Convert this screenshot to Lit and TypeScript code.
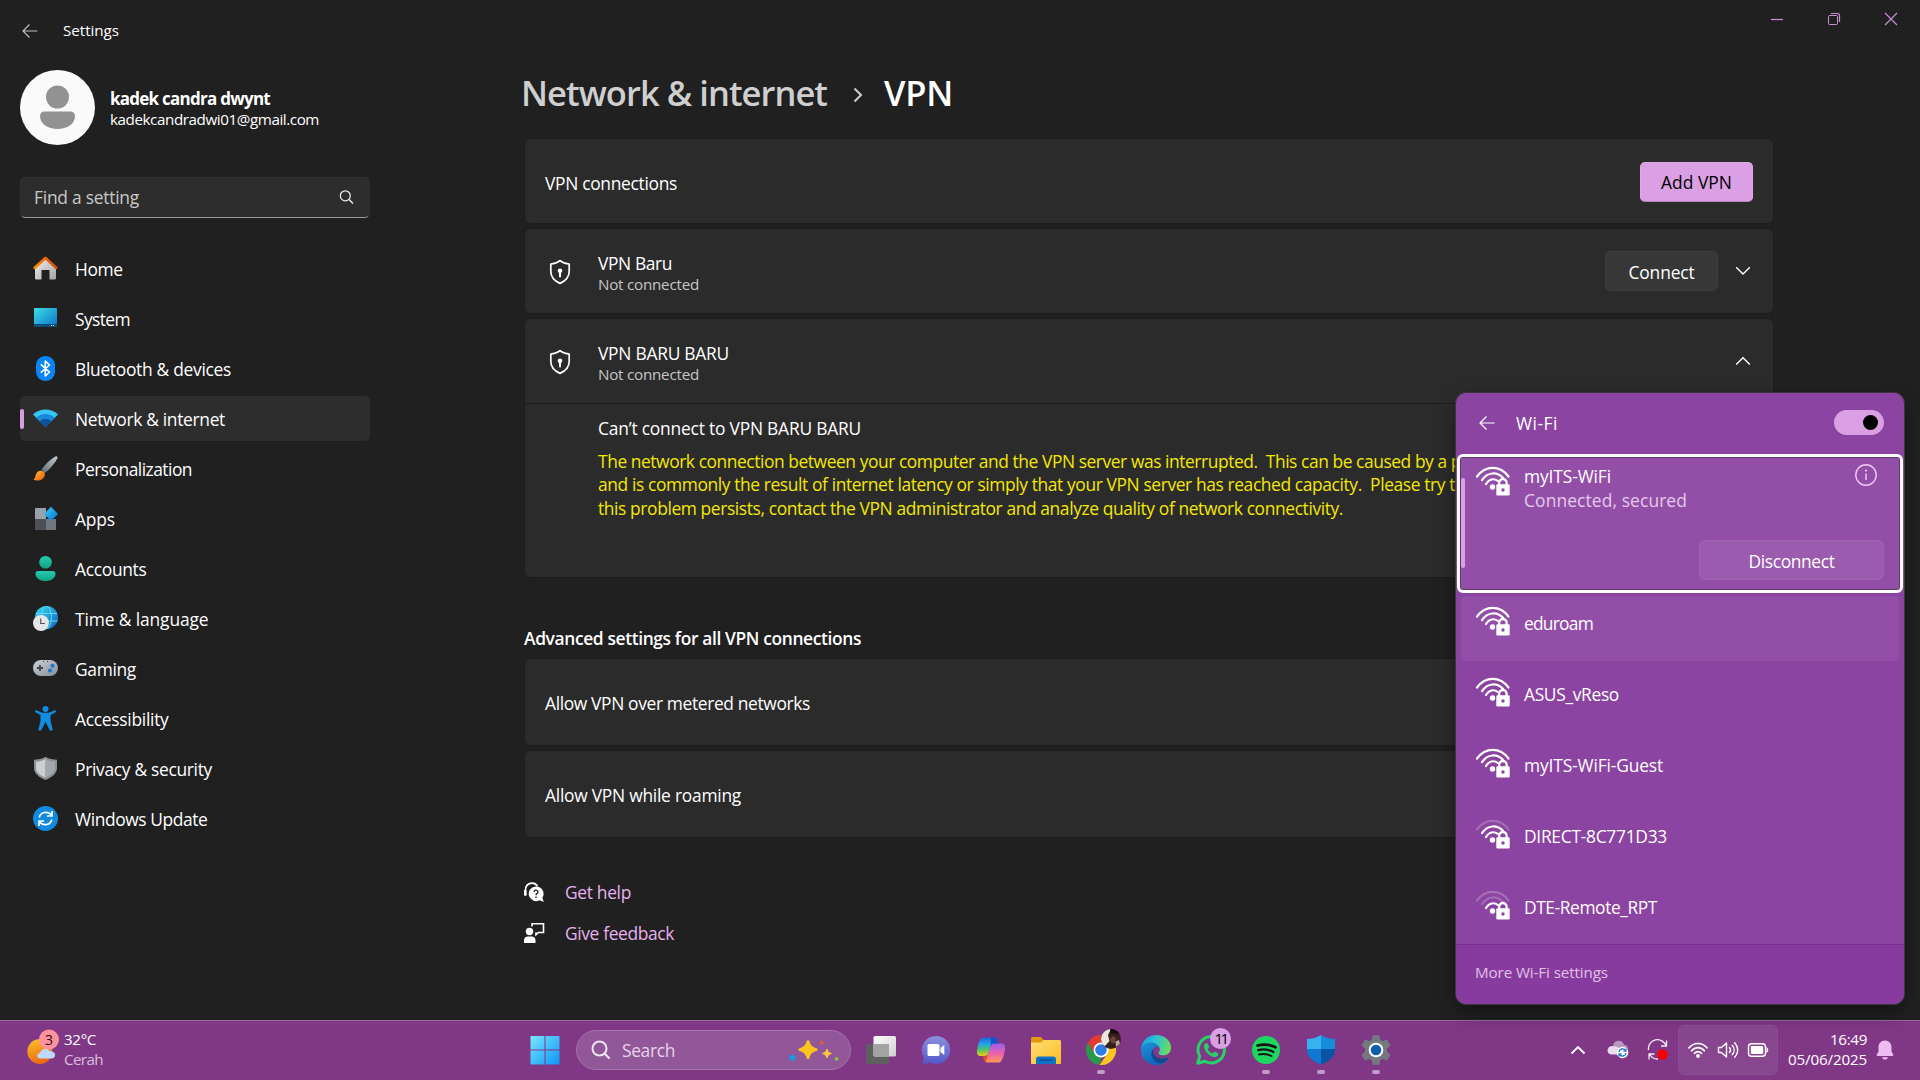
import { LitElement, html, svg, css, TemplateResult } from "lit";
import { customElement, property } from "lit/decorators.js";
import { classMap } from "lit/directives/class-map.js";

/** A single line of text, tracked so that it fills a given width. */
@customElement("fit-text")
class FitText extends LitElement {
  static styles = css`
    :host { display: inline-block; white-space: pre; }
    .line { display: inline-block; }
  `;
  @property() text = "";
  @property({ type: Number }) width = 0;

  render() {
    return html`<span class="line">${this.text}</span>`;
  }

  updated() {
    const line = this.renderRoot.querySelector(".line") as HTMLElement;
    line.style.letterSpacing = "0px";
    const natural = line.getBoundingClientRect().width;
    line.style.letterSpacing = `${(this.width - natural) / this.text.length}px`;
  }
}

const fit = (text: string, width: number) => html`<fit-text .text=${text} .width=${width}></fit-text>`;

const icon = (w: number, h: number, body: unknown, cls = "ico") =>
  html`<svg class=${cls} width=${w} height=${h} viewBox="0 0 ${w} ${h}" fill="none">${body}</svg>`;

const backArrow = icon(16, 16, svg`<path d="M7.5 1.5 1 8l6.5 6.5M1 8h14.5" stroke="currentColor" stroke-width="1.2"/>`);

const lens = icon(16, 16, svg`<circle cx="7.3" cy="6.8" r="5" stroke="#eee" stroke-width="1.2"/><path d="M11 10.5 15 14.6" stroke="#eee" stroke-width="1.4"/>`);

const chevDown = icon(16, 10, svg`<path d="M1.2 1.3 8 8l6.8-6.7" stroke="#fff" stroke-width="1.4"/>`);
const chevUp = icon(16, 10, svg`<path d="M1.2 8.5 8 1.8l6.8 6.7" stroke="#fff" stroke-width="1.4"/>`);

const shieldKey = icon(22, 26, svg`
  <path d="M11 1.6C8.2 3.9 5 4.8 1.8 5v7.2c0 5.6 3.4 9.6 9.2 12.2 5.8-2.6 9.2-6.600 9.2-12.200V5C17 4.800 13.800 3.900 11 1.600Z" stroke="#fff" stroke-width="1.7" stroke-linejoin="round"/>
  <circle cx="11" cy="11.800" r="2.300" fill="#fff"/><path d="M11 12v6.200" stroke="#fff" stroke-width="2"/>`);

interface NavItem { label: string; width: number; art: TemplateResult; selected?: boolean }

const navItems: NavItem[] = [
  { label: "Home", width: 47.5, art: icon(25, 25, svg`
    <defs><linearGradient id="hm" x1="0" y1="0" x2="1" y2="1"><stop stop-color="#efefef"/><stop offset="1" stop-color="#a5a5a5"/></linearGradient>
    <linearGradient id="hr"><stop stop-color="#fb8c00"/><stop offset="1" stop-color="#d9480f"/></linearGradient></defs>
    <path d="M2 11 12.500 2.500 23 11v11.300c0 .700-.500 1.200-1.200 1.200H16.500V14h-8v9.500H3.200C2.500 23.500 2 23 2 22.300Z" fill="url(#hm)"/>
    <path d="M1.800 11.800 12.500 2l10.700 9.800" stroke="url(#hr)" stroke-width="2.800" stroke-linecap="round" stroke-linejoin="round"/>`) },
  { label: "System", width: 55, art: icon(25, 25, svg`
    <defs><linearGradient id="sy" x1="0" y1="0" x2="1" y2="1"><stop stop-color="#3adfe6"/><stop offset="1" stop-color="#0d6fc7"/></linearGradient></defs>
    <rect x="1" y="2" width="23" height="19" rx="1" fill="url(#sy)"/><path d="M1 18h23v2c0 .600-.400 1-1 1H2c-.600 0-1-.400-1-1Z" fill="#0b4f78"/>
    <path d="M18 19.500h1M20 19.500h1" stroke="#cfe8f5"/>`) },
  { label: "Bluetooth & devices", width: 156, art: icon(25, 25, svg`
    <rect x="3" width="19" height="25" rx="9" fill="#0a84f5"/>
    <path d="M7.800 8.300 16.500 16 12.300 20V5l4.200 4L7.800 16.700" stroke="#fff" stroke-width="1.600" stroke-linejoin="round"/>`) },
  { label: "Network & internet", width: 150, selected: true, art: icon(25, 25, svg`
    <path d="M0 8.400C7 1.700 18 1.700 25 8.400L12.500 21Z" fill="#37c6f4"/><path d="M3.300 11.700c5.300-4.900 13.100-4.900 18.400 0L12.500 21Z" fill="#1788db"/><path d="M6.800 15.300c3.400-3 8-3 11.400 0L12.500 21Z" fill="#0d4f9c"/>`) },
  { label: "Personalization", width: 117, art: icon(25, 25, svg`
    <defs><linearGradient id="br" x1="1" y1="0" x2="0" y2="1"><stop stop-color="#c5cbd0"/><stop offset="1" stop-color="#5f6b74"/></linearGradient>
    <linearGradient id="bt" x1="0" y1="0" x2="1" y2="1"><stop stop-color="#ffc23d"/><stop offset="1" stop-color="#e8560c"/></linearGradient></defs>
    <path d="M8.500 13.500C13 7.500 18 2.800 22.300.500c1.500-.700 2.700.500 2 2C22 7 17.500 12.300 11.800 17Z" fill="url(#br)"/>
    <path d="M4.200 16.300c2.300-2.600 7.200-1.800 7.600 1.700.500 5.500-6.500 8-11.600 5.800 2.500-1 2-5.200 4-7.500Z" fill="url(#bt)"/>`) },
  { label: "Apps", width: 40, art: icon(25, 25, svg`
    <defs><linearGradient id="ap" x1="0" y1="0" x2="1" y2="1"><stop stop-color="#35d0f7"/><stop offset="1" stop-color="#0a6fd0"/></linearGradient></defs>
    <path d="M2 3c0-.600.400-1 1-1h10v11H2Z" fill="#98a1ac"/><path d="M2 13h11v11H3c-.600 0-1-.400-1-1Z" fill="#4c5157"/><path d="M13 13h10v10c0 .600-.400 1-1 1H13Z" fill="#717880"/>
    <path d="M18 .800 25 8l-7 7-7-7Z" fill="url(#ap)"/>`) },
  { label: "Accounts", width: 71.5, art: icon(25, 25, svg`
    <defs><linearGradient id="ac" x1="0" y1="0" x2="0" y2="1"><stop stop-color="#26cbb0"/><stop offset="1" stop-color="#12a182"/></linearGradient></defs>
    <circle cx="12.500" cy="6.300" r="6.300" fill="url(#ac)"/><path d="M5 15h15c1.500 0 2.500 1 2.500 2.400C22.500 22 18 25 12.500 25S2.500 22 2.500 17.400C2.500 16 3.500 15 5 15Z" fill="url(#ac)"/>`) },
  { label: "Time & language", width: 133.5, art: icon(25, 25, svg`
    <defs><linearGradient id="tm" x1="0" y1="0" x2="1" y2="1"><stop stop-color="#3bdcf0"/><stop offset="1" stop-color="#0b62c4"/></linearGradient></defs>
    <circle cx="13.500" cy="11.500" r="11.500" fill="url(#tm)"/><ellipse cx="13.500" cy="11.500" rx="5" ry="11.300" stroke="#62dcf4"/><path d="M3 7.500h21M3 15h21.500" stroke="#62dcf4"/>
    <circle cx="8" cy="17" r="8" fill="#e6e6e8"/><path d="M7.700 12.500v5h4.300" stroke="#555" stroke-width="1.200"/>`) },
  { label: "Gaming", width: 61, art: icon(25, 25, svg`
    <defs><linearGradient id="gm" x1="0" y1="0" x2="1" y2="1"><stop stop-color="#cdd2d7"/><stop offset="1" stop-color="#858d95"/></linearGradient></defs>
    <rect y="4" width="25" height="16" rx="8" fill="url(#gm)"/><path d="M7 9v6M4 12h6" stroke="#41464b" stroke-width="1.800"/>
    <circle cx="19.500" cy="9.700" r="2" fill="#1377d1"/><circle cx="17" cy="14.500" r="2" fill="#1377d1"/><path d="M10 5.500h1M14 5.500h1" stroke="#444"/>`) },
  { label: "Accessibility", width: 93.5, art: icon(25, 25, svg`
    <g fill="#0f8de3"><circle cx="12.500" cy="3" r="3"/><path d="M3.500 4.300 9 6.800h7l5.500-2.500c1.500-.500 2 1.400.800 2.100L17.500 9v6l2 8c.300 1.900-2.300 2.500-3 .800l-4-8-4 8c-.700 1.700-3.300 1.100-3-.800l2-8V9L2.700 6.400c-1.200-.700-.700-2.600.800-2.100Z"/></g>`) },
  { label: "Privacy & security", width: 137, art: icon(25, 25, svg`
    <path d="M12.500.800C16 3 20 3.800 24 3.800V12c0 5.500-5 9.300-11.500 12C6 21.300 1 17.500 1 12V3.800C5 3.800 9 3 12.500.800Z" fill="#8b9097"/>
    <path d="M12.500 3C9.500 4.700 6.500 5.500 3 5.800V12c0 4.200 3.800 7.300 9.500 9.800Z" fill="#cdd0d3"/><path d="M12.500 3c3 1.700 6 2.500 9.500 2.800V12c0 4.200-3.800 7.300-9.500 9.800Z" fill="#a4a8ad"/>`) },
  { label: "Windows Update", width: 132.5, art: icon(25, 25, svg`
    <circle cx="12.500" cy="12.500" r="12.500" fill="#118be0"/>
    <path d="M6.200 11.500c1.300-5.500 8-7 12.300-2.700M18.800 13.500c-1.300 5.500-8 7-12.300 2.700" stroke="#fff" stroke-width="1.700"/>
    <path d="M19 5v5h-5M6 20v-5h5" stroke="#fff" stroke-width="1.700"/>`) },
];

interface Network { name: string; width: number; level: number; hover?: boolean }

const networks: Network[] = [
  { name: "eduroam", width: 69, level: 3, hover: true },
  { name: "ASUS_vReso", width: 95, level: 3 },
  { name: "myITS-WiFi-Guest", width: 139, level: 3 },
  { name: "DIRECT-8C771D33", width: 143, level: 2 },
  { name: "DTE-Remote_RPT", width: 133, level: 1 },
];

const wifiLock = (level: number) => {
  const dim = (n: number) => (level >= n ? "1" : "0.22");
  return icon(36, 30, svg`
    <g stroke="#fff" stroke-width="2.200" stroke-linecap="round">
      <path d="M2 10.500C10.500-1 25-1 33.500 10.500" opacity=${dim(3)}/>
      <path d="M7 14.200C12.500 5.800 22 5.500 28 11.800" opacity=${dim(2)}/>
      <path d="M11 18c3-5 7.500-6 11.800-3.200" opacity=${dim(1)}/>
    </g>
    <circle cx="17.500" cy="21" r="2.700" fill="#fff"/>
    <rect x="21.300" y="18.300" width="13.400" height="11.200" rx="1.200" fill="#fff"/>
    <path d="M24.200 19v-2.300a3.700 3.700 0 0 1 7.400 0V19" stroke="#fff" stroke-width="2.300"/>
    <circle cx="28" cy="24" r="1.700" fill="#8b45a2"/>`);
};

interface Task { name: string; art: TemplateResult; running?: boolean; badge?: TemplateResult }

const tasks: Task[] = [
  { name: "Task view", art: icon(30, 30, svg`
    <defs><linearGradient id="tv" x1="0" y1="0" x2="1" y2="1"><stop stop-color="#fff"/><stop offset="1" stop-color="#cfcfcf"/></linearGradient></defs>
    <rect y="9" width="23" height="20" rx="1.500" fill="#5f5f5f"/><rect x="7.500" y="1" width="22.500" height="20.500" rx="1.500" fill="url(#tv)"/>
    <path d="M7.500 9H23v12.500H9c-.800 0-1.500-.700-1.500-1.500Z" fill="#a3a3a3"/>`) },
  { name: "Chat", art: icon(30, 30, svg`
    <defs><linearGradient id="ch" x1="0" y1="0" x2="0" y2="1"><stop stop-color="#8a90dc"/><stop offset="1" stop-color="#5457c8"/></linearGradient></defs>
    <path d="M15 1a14 14 0 1 1-5.500 26.800L1.500 29l1.300-7A14 14 0 0 1 15 1Z" fill="url(#ch)"/>
    <rect x="6.500" y="9" width="12" height="12" rx="1.500" fill="#fff"/><path d="m19.500 13 3.800-3v10l-3.800-3Z" fill="#fff"/>`) },
  { name: "Copilot", art: icon(30, 30, svg`
    <defs><linearGradient id="c1" x1="0" y1="0" x2="0" y2="1"><stop stop-color="#1f63d6"/><stop offset=".35" stop-color="#21a5ea"/><stop offset=".65" stop-color="#4cc36b"/><stop offset="1" stop-color="#f5c518"/></linearGradient>
    <linearGradient id="c2" x1="0" y1="0" x2="0" y2="1"><stop stop-color="#9a5ff0"/><stop offset=".5" stop-color="#e95fb2"/><stop offset="1" stop-color="#ff9a52"/></linearGradient></defs>
    <path d="M8 2.500h10.500c2.300 0 2.900 1.400 3.500 4l.600 2H18c-2 0-2.800 1.200-3.400 3.200l-2 6.300c-.700 2.200-1.800 3-4 3H4.500C1.500 21 .500 18.500 1 15.500 1.700 10.500 3 6 4.500 4 5.300 3 6.500 2.500 8 2.500Z" fill="url(#c1)"/>
    <path d="M22 27.500H11.500c-2.300 0-3-1.400-3.500-4L7.500 21H9c2 0 3-.800 3.600-3l2.400-7.500c.600-1.500 1.500-2 3-2h7.500c3 0 4 2.500 3.500 5.500-.700 5-2 9.500-3.500 11.500-.800 1.500-2 2-3.500 2Z" fill="url(#c2)"/>
    <path d="M15 2.500h3.500c2.300 0 2.900 1.400 3.500 4l.600 2H18c-2 0-2.800 1.200-3.400 3.200Z" fill="#1b51c4"/><path d="M7 21h2c2 0 3-.800 3.600-3l-2.400 7.500c-.500 1.300-.200 1.700.8 2-2 0-3-2-3.500-4Z" fill="#e5482d"/>`) },
  { name: "File Explorer", art: icon(30, 30, svg`
    <defs><linearGradient id="fe" x1="0" y1="0" x2="1" y2="1"><stop stop-color="#ffdf73"/><stop offset="1" stop-color="#fdbc24"/></linearGradient></defs>
    <path d="M0 3.500C0 2.600.700 2 1.500 2H9c.700 0 1.200.200 1.700.700L13 5.500V12H0Z" fill="#e0980a"/>
    <path d="M0 7.500h10l2.500-2.500H28.500c.900 0 1.500.700 1.500 1.500V28c0 .600-.400 1-1 1H1c-.600 0-1-.400-1-1Z" fill="url(#fe)"/>
    <path d="M5 29v-5c0-1.500 1-2.500 2.500-2.500h15c1.500 0 2.500 1 2.500 2.500v5Z" fill="#0f74c9"/><path d="M8.500 25h13" stroke="#0a4d8e" stroke-width="1.400"/>`) },
  { name: "Chrome", running: true, badge: icon(20, 20, svg`
    <defs><clipPath id="av"><circle cx="10" cy="10" r="10"/></clipPath></defs>
    <g clip-path="url(#av)"><rect width="20" height="20" fill="#37201c"/><path d="M0 0h10L7 6 8.500 12 4 17l-4-2Z" fill="#e9e7df"/><path d="M9 9.500 12 7l3 2-1 5-3.500.500Z" fill="#6b4339"/><path d="M14.500 12.500 18 11l1 4-4 3Z" fill="#b9a9a3"/><path d="M9 0h8l2 5-9-1Z" fill="#100b0b"/></g>`, "badge avatar"), art: icon(30, 30, svg`
    <path d="M2 7.500A15 15 0 0 1 28 7.500H15L8.500 18.700Z" fill="#e33b2e"/><path d="M2 7.500 8.500 18.700 15 22.500h1L13 29.900A15 15 0 0 1 2 7.500Z" fill="#269a48"/><path d="M28 7.500A15 15 0 0 1 13.500 29.900L21.500 18.500 20 7.500Z" fill="#fcc521"/>
    <circle cx="15" cy="15" r="7.500" fill="#fff"/><circle cx="15" cy="15" r="5.800" fill="#2f7de9"/>`) },
  { name: "Edge", art: icon(30, 30, svg`
    <defs><linearGradient id="e1" x1="0" y1=".3" x2="1" y2=".5"><stop stop-color="#1b9de2"/><stop offset=".5" stop-color="#2fc3d4"/><stop offset="1" stop-color="#6ade53"/></linearGradient>
    <linearGradient id="e2" x1="0" y1="0" x2=".6" y2="1"><stop stop-color="#1c93d8"/><stop offset="1" stop-color="#0f62b8"/></linearGradient></defs>
    <path d="M0 14C.500 6 7 0 15 0c9 0 15 6 15 12.500 0 5-3.500 7.800-8 7.800-3.500 0-5.300-1.200-4-3 2.500-4-.500-8.300-6-8.300C6 9 1.500 11 0 14Z" fill="url(#e1)"/>
    <path d="M0 14c1-4 5-6.500 10-6.500 4.500 0 8 2.500 8.500 6-2-3-6.500-2-6.500 3 0 5.500 5 9.500 10.500 9 2-.200 3.500-.800 4.800-1.500C25 28 20.500 30 15.500 30 7 30-.500 23.500 0 14Z" fill="url(#e2)"/>
    <path d="M12 13.800c-1.700 2.500-2.500 6.500 0 10.200 2 3 5.500 4.500 9 4.300 2.500-1 4.800-2.800 6.400-5.300.4-.700-.200-1-.800-.700C20 26 12 22 12 15.500Z" fill="#114a8b"/>`) },
  { name: "WhatsApp", badge: html`<span class="badge count">${fit("11", 12)}</span>`, art: icon(30, 30, svg`
    <path d="m1.800 28.200 1.900-7A13.200 13.200 0 1 1 8.800 26.300Z" stroke="#25d366" stroke-width="3" stroke-linejoin="round"/>
    <path d="M10.500 8c-1 0-2.500 1.200-2.500 3.500 0 4.500 6 10.500 10.500 10.500 2.300 0 4-1.500 4-3 0-.700-3.300-2.300-4-2.300s-1.500 2-2.200 1.800c-2-.700-4-2.700-4.600-4.300-.200-.700 1.300-1.400 1.300-2.200C13 11.500 11.800 8 10.500 8Z" fill="#25d366"/>`) },
  { name: "Spotify", running: true, art: icon(30, 30, svg`
    <circle cx="15" cy="15" r="14" fill="#1ed760"/><g stroke="#191414" stroke-linecap="round"><path d="M6.500 10.500c6-1.600 12.500-1 18 1.800" stroke-width="2.700"/><path d="M7.300 15.200c5-1.300 10.500-.800 15.200 1.800" stroke-width="2.300"/><path d="M8 19.500c4.300-1 8.700-.500 12.500 1.500" stroke-width="1.900"/></g>`) },
  { name: "Windows Security", running: true, art: icon(30, 30, svg`
    <defs><clipPath id="df"><path d="M15 0c4 2.800 8.500 4 14 4v11c0 7-6 11.500-14 14.500C7 26.500 1 22 1 15V4c5.500 0 10-1.200 14-4Z"/></clipPath></defs>
    <g clip-path="url(#df)"><path d="M0 0h15v14H0Z" fill="#36b3f0"/><path d="M15 0h15v14H15Z" fill="#168ddb"/><path d="M0 14h15v16H0Z" fill="#0e78d2"/><path d="M15 14h15v16H15Z" fill="#0a54a5"/></g>`) },
  { name: "Settings", running: true, art: icon(30, 30, svg`
    <path d="M12.300 1h5.400l1 4.300 2.800 1.600 4.200-1.400 2.900 4.700-3.300 3v3.600l3.300 3-2.900 4.700-4.200-1.400-2.800 1.600-1 4.300h-5.400l-1-4.300-2.800-1.600-4.200 1.400-2.900-4.700 3.300-3v-3.600l-3.300-3 2.900-4.700 4.200 1.400 2.800-1.600Z" fill="#747a80" stroke="#747a80" stroke-width="1.500" stroke-linejoin="round"/>
    <circle cx="15" cy="15" r="7.300" fill="#fff"/><circle cx="15" cy="15" r="5.300" fill="#0f5fae"/>`) },
];

@customElement("app-root")
class AppRoot extends LitElement {
  static styles = css`
    :host { display: block; width: 1920px; height: 1080px; overflow: hidden; position: relative; background: #202020; color: #fff;
      font: 17.4px/24px "Open Sans", "Noto Sans", sans-serif; font-stretch: 93%; }
    * { box-sizing: border-box; }
    .ico { display: block; flex: none; }
    .small { font-size: 15.2px; line-height: 20px; }
    .screen { display: flex; flex-direction: column; height: 1080px; }
    .window { height: 1020px; display: flex; flex-direction: column; }
    .titlebar { height: 60px; display: flex; justify-content: space-between; }
    .heading { display: flex; align-items: center; gap: 25px; padding: 0 0 0 22px; color: #fff; }
    .heading .label { margin-bottom: 1px; }
    .heading svg { color: #bdbdbd; margin-top: 1px; }
    .caption { display: flex; padding-top: 12px; gap: 43px; margin-right: 22px; color: #c98fd4; }

    .body { flex: 1; display: flex; }
    .sidebar { width: 370px; padding: 10px 0 0 20px; }
    .profile { display: flex; gap: 15px; align-items: center; height: 75px; }
    .who { display: flex; flex-direction: column; padding-top: 2px; }
    .name { font-weight: 700; line-height: 22px; font-size: 17px; }
    .who .small { margin-top: -1px; }
    .search { margin-top: 32px; height: 41px; width: 350px; border-radius: 5px; background: #2d2d2d; border: 1px solid #303030; border-bottom: 1px solid #9a9a9a;
      display: flex; justify-content: space-between; align-items: center; padding: 0 15px 1px 13px; color: #c8c8c8; }
    .nav { margin-top: 28px; display: flex; flex-direction: column; gap: 5px; }
    .item { height: 45px; width: 350px; display: flex; align-items: center; border-radius: 5px; padding-left: 13px; gap: 17px; }
    .item.selected { background: #2d2d2d; padding-left: 0; gap: 17px; }
    .item.selected::before { content: ""; width: 4px; height: 20px; border-radius: 2px; background: #d99ee2; margin-right: -8px; }
    .item .label { padding-top: 0; }

    .main { margin-left: 155px; width: 1248px; padding-top: 9px; }
    .crumbs { height: 48px; line-height: 48px; display: flex; align-items: center; font-size: 34.5px; font-weight: 600; margin-left: -4px; color: #cfcfcf; }
    .crumbs .sep { margin: 3px 20px 0 25px; }
    .crumbs .here { color: #fff; }
    .cards { display: flex; flex-direction: column; gap: 6px; margin-top: 22px; }
    .card { background: #2b2b2b; border-radius: 5px; box-shadow: 0 0 0 1px #1d1d1d; }
    .row { height: 84px; display: flex; align-items: center; justify-content: space-between; padding: 0 20px 0 19px; }
    .row .label { padding: 3px 0 0 1px; }
    .entry { display: flex; align-items: center; gap: 27px; padding: 2px 0 0 5px; }
    .entry .texts { display: flex; flex-direction: column; padding-top: 2px; line-height: 22px; }
    .sub { color: #c6c6c6; }
    .actions { display: flex; align-items: center; gap: 17px; padding-right: 2px; }
    .btn { height: 40px; border-radius: 5px; display: flex; align-items: center; justify-content: center; background: #373737; border: 1px solid #3e3e3e; width: 113px; padding-top: 1px; }
    .btn.accent { background: #db9fe3; border-color: #dfa9e6; border-bottom-color: #b583bc; color: #000; padding-bottom: 1px; padding-top: 0; margin-bottom: -2px; }
    .detail { border-top: 1px solid #1d1d1d; height: 174px; padding: 12px 0 0 73px; }
    .error { color: #f4e800; margin-top: 9.8px; line-height: 23.5px; display: flex; flex-direction: column; }
    .error .line { white-space: pre; height: 23.5px; }
    .section { margin-top: 49px; font-weight: 600; margin-left: -1px; }
    .cards.more { margin-top: 9px; }
    .more .row { height: 86px; }
    .more .row .label { padding-top: 2px; }
    .links { margin-top: 34px; color: #e8b0ee; margin-left: -2px; }
    .link { height: 41px; display: flex; align-items: center; gap: 20px; }

    .flyout { position: absolute; left: 1456px; top: 393px; width: 448px; height: 611px; border-radius: 10px; background: #8b44a1; box-shadow: 0 0 0 1px #3d3440, 0 8px 20px rgba(0,0,0,.4);
      display: flex; flex-direction: column; overflow: hidden; }
    .fly-head { height: 61px; flex: none; display: flex; align-items: center; padding: 0 20px 2px 23px; }
    .fly-head .title { margin-left: 21px; flex: 1; }
    .toggle { width: 50px; height: 25px; border-radius: 13px; background: #db9fe3; display: flex; justify-content: flex-end; align-items: center; padding-right: 6px; }
    .knob { width: 15px; height: 15px; border-radius: 50%; background: #000; }
    .focused { height: 139px; flex: none; margin: 0 1px; border: 3px solid #fff; border-radius: 6px; background: #934fa8; box-shadow: inset 0 0 0 1px #5b3a66; display: flex; padding: 7px 16px 0 0; }
    .marker { width: 4px; height: 90px; margin: 14px 10px 0 1px; border-radius: 2px; background: #db9fe3; }
    .focused .ico { margin-top: 2px; }
    .focused .info { margin: 0; }
    .conn { flex: 1; display: flex; flex-direction: column; margin-left: 13px; }
    .conn-top { display: flex; justify-content: space-between; height: 48px; padding-right: 7px; }
    .conn-top .texts { display: flex; flex-direction: column; }
    .status { color: #e4cbe8; }
    .disconnect { width: 185px; height: 40px; border-radius: 6px; background: #9b5bae; border: 1px solid #a063b2; align-self: flex-end; margin-top: 28px; display: flex; align-items: center; justify-content: center; padding-top: 1px; }
    .nets { flex: 1; min-height: 0; display: flex; flex-direction: column; gap: 6px; padding: 3px 5px 0; }
    .net { height: 65px; flex: none; border-radius: 5px; display: flex; padding: 10px 0 0 14px; gap: 13px; }
    .net .label { padding-top: 5px; }
    .net.hover { background: #934fa8; }
    .fly-foot { height: 60px; flex: none; background: #883b9e; border-top: 1px solid #783090; color: #e0c1e6; padding: 17px 0 0 19px; }

    .taskbar { height: 60px; background: #803786; border-top: 1px solid #9a6b9f; display: grid; grid-template-columns: 518px 1fr auto; }
    .weather { display: flex; align-items: center; padding-left: 27px; gap: 5px; }
    .stack { display: flex; flex-direction: column; padding-bottom: 4px; }
    .stack .dim { color: #dabfdd; }
    .sun { margin-top: -7px; }
    .num { font-size: 14px; fill: #2a1015; font-family: "Open Sans", sans-serif; }
    .apps { display: flex; align-items: center; padding-bottom: 1px; }
    .start { width: 53px; display: flex; justify-content: center; }
    .pill { width: 275px; height: 40px; margin: 0 2px 0 5px; border-radius: 20px; background: #915799; border: 1px solid #a474ab; display: flex; align-items: center; padding: 0 10px 0 14px; color: #e8d3ea; }
    .pill .word { flex: 1; margin-left: 11px; }
    .task { width: 55px; height: 58px; display: grid; place-items: center; position: relative; }
    .task.running::after { content: ""; position: absolute; left: 23.5px; top: 49px; width: 8px; height: 4px; border-radius: 2px; background: #c39ac8; }
    .badge { position: absolute; }
    .badge.avatar { left: 28px; top: 8px; }
    .badge.count { left: 27px; top: 7px; width: 21px; height: 21px; border-radius: 50%; background: #db9fe3; color: #000; font-size: 15px; line-height: 21px; text-align: center; }
    .tray { display: flex; align-items: center; padding: 0 18px 1px 0; }
    .tcell { width: 40px; display: flex; justify-content: center; }
    .quick { width: 100px; height: 50px; border-radius: 6px; background: #88468f; border: 1px solid #8e4f95; display: flex; align-items: center; justify-content: space-between; padding: 0 8px; margin-right: 10px; }
    .clock { width: 79px; display: flex; flex-direction: column; align-items: flex-end; padding-bottom: 3px; margin-right: 1px; }
    .bell { width: 34px; display: flex; justify-content: center; }
  `;

  private titlebar() {
    return html`<div class="titlebar">
      <div class="heading small">${backArrow}<span class="label">${fit("Settings", 56)}</span></div>
      <div class="caption">
        ${icon(14, 14, svg`<path d="M1 7.500h12" stroke="currentColor" stroke-width="1.200"/>`)}
        ${icon(14, 14, svg`<rect x="1.500" y="3.500" width="9" height="9" rx="1" stroke="currentColor"/><path d="M4 1.500h6.500a2 2 0 0 1 2 2V10" stroke="currentColor" stroke-width="1.200"/>`)}
        ${icon(14, 14, svg`<path d="m1 1 12 12M13 1 1 13" stroke="currentColor" stroke-width="1.200"/>`)}
      </div>
    </div>`;
  }

  private sidebar() {
    return html`<aside class="sidebar">
      <div class="profile">
        ${icon(75, 75, svg`<circle cx="37.500" cy="37.500" r="37.500" fill="#fafafa"/><circle cx="37.500" cy="27" r="11.500" fill="#929292"/>
          <path d="M24.500 41.500h26c2.700 0 4.500 1.800 4.500 4.500 0 8-8 13-17.500 13S20 54 20 46c0-2.700 1.800-4.500 4.500-4.500Z" fill="#929292"/>`)}
        <div class="who"><span class="name">${fit("kadek candra dwynt", 160)}</span><span class="small">${fit("kadekcandradwi01@gmail.com", 209)}</span></div>
      </div>
      <div class="search">${fit("Find a setting", 105)}${lens}</div>
      <nav class="nav">
        ${navItems.map((n) => html`<div class=${classMap({ item: true, selected: !!n.selected })}>${n.art}<span class="label">${fit(n.label, n.width)}</span></div>`)}
      </nav>
    </aside>`;
  }

  private main() {
    return html`<main class="main">
      <div class="crumbs">
        ${fit("Network & internet", 306)}
        <span class="sep">${icon(12, 16, svg`<path d="m2.500 1.500 6.500 6.500-6.500 6.500" stroke="#cfcfcf" stroke-width="2"/>`)}</span>
        <span class="here">${fit("VPN", 69)}</span>
      </div>
      <div class="cards">
        <div class="card row"><span class="label">${fit("VPN connections", 132)}</span><span class="btn accent">${fit("Add VPN", 71)}</span></div>
        <div class="card row">
          <div class="entry">${shieldKey}<div class="texts">${fit("VPN Baru", 74)}<span class="sub small">${fit("Not connected", 101)}</span></div></div>
          <div class="actions"><span class="btn">${fit("Connect", 66)}</span>${chevDown}</div>
        </div>
        <div class="card">
          <div class="row">
            <div class="entry">${shieldKey}<div class="texts">${fit("VPN BARU BARU", 131)}<span class="sub small">${fit("Not connected", 101)}</span></div></div>
            <div class="actions">${chevUp}</div>
          </div>
          <div class="detail">
            ${fit("Can’t connect to VPN BARU BARU", 263)}
            <div class="error">
              <div class="line">${fit("The network connection between your computer and the VPN server was interrupted.  This can be caused by a p", 863)}</div>
              <div class="line">${fit("and is commonly the result of internet latency or simply that your VPN server has reached capacity.  Please try t", 857)}</div>
              <div class="line">${fit("this problem persists, contact the VPN administrator and analyze quality of network connectivity.", 745)}</div>
            </div>
          </div>
        </div>
      </div>
      <div class="section">${fit("Advanced settings for all VPN connections", 337)}</div>
      <div class="cards more">
        <div class="card row"><span class="label">${fit("Allow VPN over metered networks", 265)}</span></div>
        <div class="card row"><span class="label">${fit("Allow VPN while roaming", 196)}</span></div>
      </div>
      <div class="links">
        <div class="link">${icon(22, 22, svg`
          <path d="M2.500 14.500V8.500a6.500 6.500 0 0 1 12-3.300" stroke="#fff" stroke-width="1.600"/><path d="M1 9v5.500h2.500V9" fill="#fff"/>
          <path d="M13 5.500a7.300 7.300 0 1 0 3.500 13.700l4.200 1.800-1.300-4.300A7.300 7.300 0 0 0 13 5.500Z" fill="#fff"/>
          <path d="M11 10.800c.3-2.300 4-2.100 4 .2 0 1.500-2 1.600-2 3.300M13 15.500v1.400" stroke="#222" stroke-width="1.300"/>`)}${fit("Get help", 66)}</div>
        <div class="link">${icon(22, 22, svg`
          <circle cx="6.500" cy="9.500" r="3.700" fill="#fff"/><path d="M1 21v-2.500c0-2.500 1.500-4 4-4h3.500c2.500 0 4 1.500 4 4V21Z" fill="#fff"/>
          <path d="M9 4.500V1.800h11.500v8.700h-5l-2.500 2.300v-2.500" stroke="#fff" stroke-width="1.600"/>`)}${fit("Give feedback", 109)}</div>
      </div>
    </main>`;
  }

  private flyout() {
    return html`<section class="flyout">
      <div class="fly-head">${backArrow}<span class="title">${fit("Wi-Fi", 42)}</span><span class="toggle"><span class="knob"></span></span></div>
      <div class="focused">
        <span class="marker"></span>${wifiLock(3)}
        <div class="conn">
          <div class="conn-top">
            <div class="texts">${fit("myITS-WiFi", 87)}<span class="status">${fit("Connected, secured", 163)}</span></div>
            ${icon(22, 22, svg`<circle cx="11" cy="11" r="10.200" stroke="#f1c8f5" stroke-width="1.400"/><path d="M11 9.500V16" stroke="#f1c8f5" stroke-width="1.500"/><circle cx="11" cy="6.600" r="1.100" fill="#f1c8f5"/>`, "info")}
          </div>
          <span class="disconnect">${fit("Disconnect", 86)}</span>
        </div>
      </div>
      <div class="nets">
        ${networks.map((n) => html`<div class=${classMap({ net: true, hover: !!n.hover })}>${wifiLock(n.level)}<span class="label">${fit(n.name, n.width)}</span></div>`)}
      </div>
      <div class="fly-foot small">${fit("More Wi-Fi settings", 133)}</div>
    </section>`;
  }

  private taskbar() {
    return html`<footer class="taskbar">
      <div class="weather">
        ${icon(32, 36, svg`
          <defs><linearGradient id="sn" x1="0" y1="0" x2=".3" y2="1"><stop stop-color="#f7c52f"/><stop offset="1" stop-color="#ee6a10"/></linearGradient></defs>
          <circle cx="12.800" cy="22.500" r="12.500" fill="url(#sn)"/><path d="M13.500 29.500c-4 0-4.500-5-.5-5.500 1-5 8-5.500 9.500-2 4 .5 6 2 5.500 4.500-.2 2-1.500 3-3.500 3Z" fill="#bcd8fa"/>
          <circle cx="22" cy="10.500" r="10" fill="#ff929c"/><text class="num" x="18" y="15.500">3</text>`, "ico sun")}
        <div class="stack small">${fit("32°C", 32)}<span class="dim">${fit("Cerah", 39)}</span></div>
      </div>
      <div class="apps">
        <span class="start">${icon(30, 30, svg`
          <defs><linearGradient id="wn" x1="0" y1="0" x2="30" y2="30" gradientUnits="userSpaceOnUse"><stop stop-color="#7ce9fc"/><stop offset="1" stop-color="#0a93f5"/></linearGradient></defs>
          <path d="M.5 2c0-.6.4-1 1-1h13v13.500H.5ZM15.500 1h13c.6 0 1 .4 1 1v12.500h-14ZM.5 15.500h14v14h-13c-.6 0-1-.4-1-1ZM15.500 15.500h14v13c0 .6-.4 1-1 1h-13Z" fill="url(#wn)"/>`)}</span>
        <div class="pill">
          ${icon(20, 20, svg`<circle cx="8.500" cy="8.500" r="7" stroke="#f0e4f1" stroke-width="2"/><path d="m13.500 13.500 4.500 4.500" stroke="#f0e4f1" stroke-width="2.200" stroke-linecap="round"/>`)}
          <span class="word">${fit("Search", 53)}</span>
          ${icon(52, 24, svg`
            <path d="M20 2.200c.9 0 1.300.6 1.500 1.400 1.300 4 2.300 5.200 7 6.700 1.500.6 1.500 2.200 0 2.800-4.700 1.500-5.700 2.700-7 6.700-.5 1.700-2.500 1.700-3 0-1.300-4-2.300-5.200-7-6.700-1.500-.6-1.500-2.200 0-2.800 4.700-1.500 5.700-2.700 7-6.700.2-.8.7-1.400 1.500-1.400Z" fill="#fbc51d"/>
            <path d="M39 11c.9 3 1.500 3.500 4.500 4.500-3 1-3.600 1.500-4.500 4.500-.9-3-1.500-3.500-4.500-4.500 3-1 3.600-1.500 4.500-4.500Z" fill="#fbc93a" stroke="#fbc93a"/>
            <path d="M4.500 15.500 6 18l2.500 1-2 2-.5 2.500-2.500-1.500L.5 22 2 19.500.8 17l2.700.5Z" fill="#159ce8"/>
            <circle cx="33.500" cy="4.800" r="1.900" fill="#ea5b2a"/><circle cx="48.500" cy="20.800" r="1.900" fill="#8bc443"/>`)}
        </div>
        ${tasks.map((t) => html`<div class=${classMap({ task: true, running: !!t.running })}>${t.art}${t.badge ?? ""}</div>`)}
      </div>
      <div class="tray">
        <span class="tcell">${icon(16, 10, svg`<path d="M1.500 8.500 8 2l6.500 6.500" stroke="#fff" stroke-width="1.900"/>`)}</span>
        <span class="tcell">${icon(22, 20, svg`
          <path d="M6 5C8-1 16 0 17 5c3 0 4 2 4 5H8Z" fill="#b998c0"/><path d="M5 14.500c-6 0-6-8 0-8.500 3.500 0 6 1 8 3l2 5.500Z" fill="#e9dcec"/>
          <circle cx="15.500" cy="12.500" r="5.800" fill="#fff"/><path d="M12 12c.5-3.300 4.500-4.300 6.500-1.500M19 13c-.5 3.300-4.500 4.300-6.500 1.500" stroke="#1670c4" stroke-width="1.400"/><path d="M19 8.500v2.700h-2.700M12 16.500v-2.700h2.700" stroke="#1670c4" stroke-width="1.200"/>`)}</span>
        <span class="tcell">${icon(22, 22, svg`
          <path d="M1.500 11A9 9 0 0 1 19 7M19.500 1.500V7H14M11 20A9 9 0 0 1 2.800 15.500M2 20.500V15h5.500" stroke="#f5eaf6" stroke-width="1.300"/><circle cx="15.500" cy="15.500" r="5.200" fill="#f90000"/>`)}</span>
        <div class="quick">
          ${icon(22, 18, svg`<g stroke="#fff" stroke-width="1.600" stroke-linecap="round"><path d="M1.800 7C6.800.9 15.200.9 20.200 7"/><path d="M4.600 9.800c3.500-4.300 9.300-4.300 12.800 0"/><path d="M7.300 12.500c2-2.500 5.400-2.500 7.400 0"/></g><circle cx="11" cy="15" r="1.900" fill="#fff"/>`)}
          ${icon(22, 18, svg`<path d="M1.500 6.500h3L9.500 2v14l-5-4.500h-3Z" stroke="#fff" stroke-width="1.400" stroke-linejoin="round"/><path d="M12.500 6.500c1.300 1.500 1.300 3.500 0 5M15.200 4.200c2.600 2.800 2.600 6.800 0 9.600M17.700 1.700c4 4.300 4 10.300 0 14.600" stroke="#fff" stroke-width="1.400" stroke-linecap="round"/>`)}
          ${icon(22, 18, svg`<rect x="1.500" y="2.700" width="17" height="12.600" rx="3" stroke="#fff" stroke-width="1.400"/><rect x="3.800" y="5" width="12.400" height="8" rx="1" fill="#fff"/><path d="M19.500 6.500c1.700.5 1.700 4.500 0 5" fill="#fff" stroke="#fff"/>`)}
        </div>
        <div class="clock small">${fit("16:49", 37)}${fit("05/06/2025", 79)}</div>
        <span class="bell">${icon(18, 20, svg`<path d="M9 .5c4 0 6.500 3 6.500 6.500v4.500l1.800 3.300c.2.6 0 1.200-.8 1.200h-15c-.8 0-1-.6-.8-1.200l1.800-3.300V7C2.500 3.500 5 .5 9 .5ZM6 17.200h6c-.5 1.500-1.500 2.300-3 2.300s-2.500-.8-3-2.300Z" fill="#efbdf3"/>`)}</span>
      </div>
    </footer>`;
  }

  render() {
    return html`<div class="screen">
        <div class="window">${this.titlebar()}<div class="body">${this.sidebar()}${this.main()}</div></div>
        ${this.taskbar()}
      </div>
      ${this.flyout()}`;
  }
}
